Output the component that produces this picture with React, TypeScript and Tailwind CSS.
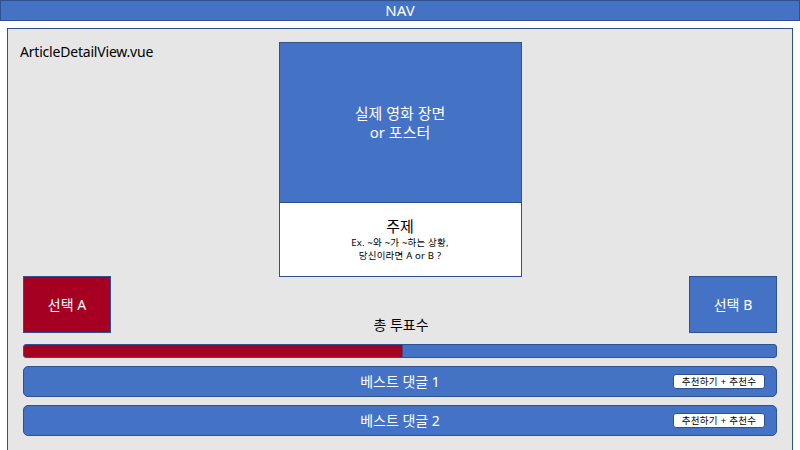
export default function App() {
  return (
    <div className="w-[800px] h-[450px] overflow-hidden bg-white font-['Noto_Sans','Noto_Sans_CJK_KR',sans-serif]">
      {/* NAV */}
      <nav className="h-[21px] bg-[#4472C4] border border-[#2F528F] flex items-center justify-center text-white text-[15px] leading-none">
        NAV
      </nav>

      {/* ArticleDetailView */}
      <main className="mx-[7px] mt-[7px] h-[440px] border border-[#2F528F] bg-[#E7E6E6] px-[15px] pt-[13px]">
        <div className="grid grid-cols-[1fr_243px_1fr]">
          <div className="text-[14px] leading-none text-black -ml-[3px] mt-[3px] tracking-[-0.2px]">ArticleDetailView.vue</div>

          {/* 포스터 + 주제 */}
          <div className="h-[235px] border border-[#2F528F] flex flex-col">
            <div className="h-[160px] bg-[#4472C4] border-b border-[#2F528F] flex flex-col items-center justify-center text-white text-[15px] leading-[19px] pt-[1px]">
              <span>실제 영화 장면</span>
              <span>or 포스터</span>
            </div>
            <div className="flex-1 bg-white flex flex-col items-center justify-center text-black">
              <span className="text-[15px] leading-[19px]">주제</span>
              <span className="text-[9.5px] leading-[13px] tracking-[0.2px]">Ex. ~와 ~가 ~하는 상황,</span>
              <span className="text-[9.5px] leading-[13px] tracking-[0.2px]">당신이라면 A or B ?</span>
            </div>
          </div>
          <div />
        </div>

        {/* 선택 버튼 */}
        <div className="-mt-px flex items-end justify-between">
          <button className="w-[88px] h-[57px] bg-[#A50021] border border-[#2F528F] text-white text-[14px] flex items-center justify-center">
            선택 A
          </button>
          <div className="text-[14px] leading-none text-black mb-[1px] ml-[2px]">총 투표수</div>
          <button className="w-[88px] h-[57px] bg-[#4472C4] border border-[#2F528F] text-white text-[14px] flex items-center justify-center">
            선택 B
          </button>
        </div>

        {/* 투표 비율 */}
        <div className="mt-[11px] h-[14px] rounded-[3px] border border-[#2F528F] bg-[#4472C4] flex overflow-hidden">
          <div className="w-[379px] h-full bg-[#A50021] border-r border-[#2F528F]" />
        </div>

        {/* 베스트 댓글 */}
        <div className="mt-[8px] flex flex-col gap-[8px]">
          {[1, 2].map((n) => (
            <div
              key={n}
              className="relative h-[31px] rounded-[5px] border border-[#2F528F] bg-[#4472C4] flex items-center justify-center text-white text-[14px]"
            >
              베스트 댓글 {n}
              <span className="absolute right-[11px] top-[7px] h-[15px] w-[92px] rounded-[3px] border border-[#2F528F] bg-white text-black text-[9.5px] tracking-[0.3px] flex items-center justify-center leading-none">
                추천하기 + 추천수
              </span>
            </div>
          ))}
        </div>
      </main>
    </div>
  )
}
